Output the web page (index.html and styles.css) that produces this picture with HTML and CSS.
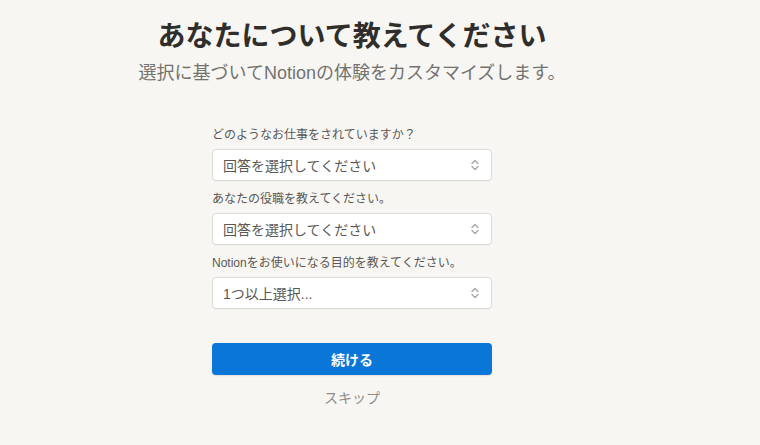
FILE: index.html
```html
<!DOCTYPE html>
<html lang="ja">
<head>
<meta charset="utf-8">
<link rel="stylesheet" href="styles.css">
</head>
<body>
<div class="page">
  <h1 class="title">あなたについて教えてください</h1>
  <p class="subtitle">選択に基づいてNotionの体験をカスタマイズします。</p>
  <form class="form">
    <div class="field">
      <div class="label">どのようなお仕事をされていますか？</div>
      <div class="select"><span>回答を選択してください</span>
        <svg class="chev" width="10" height="14" viewBox="0 0 10 14"><path d="M2 5.5 L5 2.5 L8 5.5 M2 8.5 L5 11.5 L8 8.5" fill="none" stroke="#a8a7a3" stroke-width="1.4" stroke-linecap="round" stroke-linejoin="round"/></svg>
      </div>
    </div>
    <div class="field">
      <div class="label">あなたの役職を教えてください。</div>
      <div class="select"><span>回答を選択してください</span>
        <svg class="chev" width="10" height="14" viewBox="0 0 10 14"><path d="M2 5.5 L5 2.5 L8 5.5 M2 8.5 L5 11.5 L8 8.5" fill="none" stroke="#a8a7a3" stroke-width="1.4" stroke-linecap="round" stroke-linejoin="round"/></svg>
      </div>
    </div>
    <div class="field">
      <div class="label">Notionをお使いになる目的を教えてください。</div>
      <div class="select"><span>1つ以上選択...</span>
        <svg class="chev" width="10" height="14" viewBox="0 0 10 14"><path d="M2 5.5 L5 2.5 L8 5.5 M2 8.5 L5 11.5 L8 8.5" fill="none" stroke="#a8a7a3" stroke-width="1.4" stroke-linecap="round" stroke-linejoin="round"/></svg>
      </div>
    </div>
    <div class="button">続ける</div>
    <div class="skip">スキップ</div>
  </form>
</div>
</body>
</html>
```
FILE: styles.css
```css
html, body {
  margin: 0;
  padding: 0;
  background: #f7f6f3;
}
body {
  font-family: "Liberation Sans", "Noto Sans CJK JP", sans-serif;
  color: #37352f;
}
.page {
  width: 704px;
  display: flex;
  flex-direction: column;
  align-items: center;
}
.title {
  margin: 19px 0 0;
  font-size: 28px;
  line-height: 36px;
  font-weight: 700;
  color: #2f2e2b;
}
.subtitle {
  margin: 6px 0 0;
  font-size: 18px;
  line-height: 24px;
  color: #73726e;
}
.form {
  width: 280px;
  margin-top: 42px;
  display: flex;
  flex-direction: column;
}
.field {
  display: flex;
  flex-direction: column;
  margin-bottom: 10px;
}
.label {
  font-size: 12px;
  line-height: 16px;
  color: #5a5854;
  margin-bottom: 6px;
}
.select {
  height: 32px;
  box-sizing: border-box;
  border: 1px solid #dcdbd8;
  border-radius: 4px;
  background: #ffffff;
  display: flex;
  align-items: center;
  justify-content: space-between;
  padding: 0 11px 0 10px;
  font-size: 14px;
  color: #5a5854;
  box-shadow: 0 1px 1px rgba(15, 15, 15, 0.03);
}
.chev {
  display: block;
}
.button {
  margin-top: 24px;
  height: 32px;
  border-radius: 4px;
  background: #0a77d8;
  color: #ffffff;
  font-size: 14px;
  font-weight: 700;
  display: flex;
  align-items: center;
  justify-content: center;
  box-shadow: 0 1px 2px rgba(15, 15, 15, 0.1);
}
.skip {
  margin-top: 13px;
  text-align: center;
  font-size: 14px;
  line-height: 20px;
  color: #8e8d89;
}
```
